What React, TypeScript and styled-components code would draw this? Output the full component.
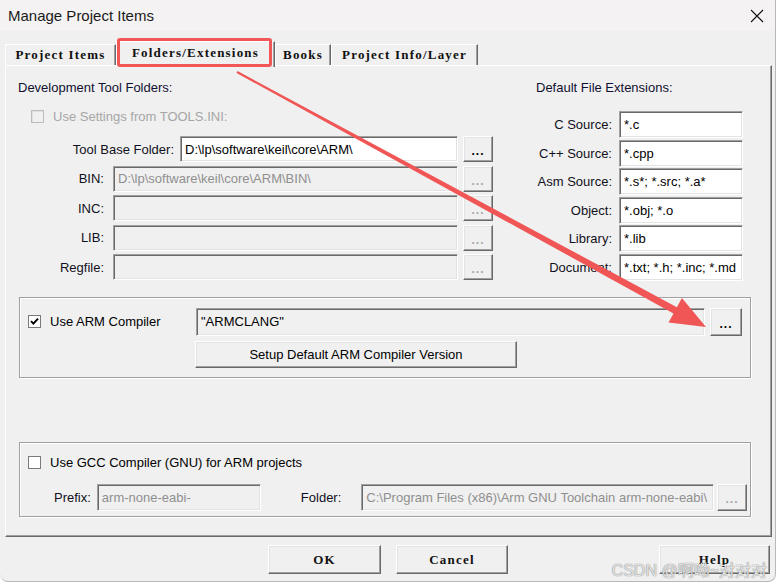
import React from 'react';
import styled, { createGlobalStyle } from 'styled-components';

const GlobalStyle = createGlobalStyle`
  html, body { margin: 0; padding: 0; background: #ffffff; }
  body {
    font-family: "Liberation Sans", Arial, sans-serif;
    font-size: 13px;
    color: #000;
  }
  * { box-sizing: border-box; }
`;

const Window = styled.div`
  position: relative;
  width: 776px;
  height: 582px;
  background: #f0f0f0;
  border-right: 1px solid #b8b8b8;
  border-bottom: 1px solid #b8b8b8;
  border-radius: 0 0 8px 8px;
  overflow: hidden;
  display: flex;
  flex-direction: column;
`;

const TitleBar = styled.div`
  height: 31px;
  flex: none;
  display: flex;
  align-items: center;
  justify-content: space-between;
  padding: 0 10px 0 8px;
  background: #f4f2f2;
  font-size: 15px;
  color: #1a1a1a;
`;

const TabStrip = styled.div`
  position: relative;
  z-index: 1;
  display: flex;
  align-items: flex-end;
  height: 24px;
  margin: 10px 0 0 5px;
  flex: none;
`;

const Tab = styled.div<{ $w: number; $active?: boolean }>`
  position: relative;
  width: ${p => p.$w}px;
  height: ${p => (p.$active ? 26 : 21)}px;
  margin-bottom: ${p => (p.$active ? -2 : 0)}px;
  padding-bottom: ${p => (p.$active ? 4 : 0)}px;
  display: flex;
  align-items: center;
  justify-content: center;
  background: #f0f0f0;
  border-top: 1px solid #ffffff;
  border-left: 1px solid #ffffff;
  border-right: 1px solid #696969;
  box-shadow: inset -1px 0 #a0a0a0;
  font-family: "Liberation Serif", "Times New Roman", serif;
  font-size: 13px;
  font-weight: bold;
  letter-spacing: 1.2px;
  color: #111;
  white-space: nowrap;
`;

const Highlight = styled.div`
  position: absolute;
  left: 0;
  right: 2px;
  top: -4px;
  height: 29px;
  border: 3px solid #f25757;
  border-radius: 3px;
  pointer-events: none;
`;

const Panel = styled.div`
  flex: none;
  height: 472px;
  margin: 0 3px 0 5px;
  padding: 14px 20px 0 12px;
  border-top: 1px solid #ffffff;
  border-left: 1px solid #ffffff;
  border-right: 1px solid #696969;
  border-bottom: 1px solid #696969;
  box-shadow: inset -1px -1px #a0a0a0;
`;

const TopSection = styled.div`
  display: flex;
  align-items: flex-start;
`;

const FolderColumn = styled.div`
  width: 475px;
  display: flex;
  flex-direction: column;
`;

const ExtColumn = styled.div`
  width: 208px;
  margin-left: 43px;
  display: flex;
  flex-direction: column;
`;

const Heading = styled.div`
  line-height: 16px;
  height: 16px;
  color: #101030;
`;

const CheckRow = styled.div<{ $indent: number; $top: number }>`
  display: flex;
  align-items: center;
  height: 14px;
  margin-top: ${p => p.$top}px;
  padding-left: ${p => p.$indent}px;
`;

const Box = styled.span<{ $disabled?: boolean }>`
  width: 13px;
  height: 13px;
  flex: none;
  display: inline-flex;
  align-items: center;
  justify-content: center;
  border: 1px solid ${p => (p.$disabled ? '#bcbcbc' : '#7a7a7a')};
  background: ${p => (p.$disabled ? '#f0f0f0' : '#ffffff')};
  box-shadow: ${p => (p.$disabled ? 'inset 1px 1px #e0e0e0' : 'none')};
`;

const CheckText = styled.span<{ $disabled?: boolean }>`
  margin-left: 9px;
  white-space: nowrap;
  color: ${p => (p.$disabled ? '#a6a6a6' : '#000')};
`;

const Rows = styled.div<{ $top: number; $gap: number }>`
  display: flex;
  flex-direction: column;
  gap: ${p => p.$gap}px;
  margin-top: ${p => p.$top}px;
`;

const Row = styled.div<{ $h: number }>`
  display: flex;
  align-items: center;
  height: ${p => p.$h}px;
`;

const Label = styled.span<{ $w: number; $gap: number }>`
  width: ${p => p.$w}px;
  flex: none;
  padding-right: ${p => p.$gap}px;
  text-align: right;
  white-space: nowrap;
  color: #101020;
`;

const Field = styled.div<{ $w?: number; $white?: boolean; $dim?: boolean }>`
  ${p => (p.$w ? `width: ${p.$w}px; flex: none;` : 'flex: 1; min-width: 0;')}
  height: 100%;
  display: flex;
  align-items: center;
  padding: 0 4px;
  overflow: hidden;
  white-space: nowrap;
  background: ${p => (p.$white ? '#ffffff' : '#f0f0f0')};
  color: ${p => (p.$dim ? '#8f8f8f' : '#000')};
  border-top: 1px solid #a0a0a0;
  border-left: 1px solid #a0a0a0;
  border-right: 1px solid #ffffff;
  border-bottom: 1px solid #ffffff;
  box-shadow: inset 1px 1px #696969, inset -1px -1px #e3e3e3;
`;

const RaisedButton = styled.div<{ $w: number; $h: number }>`
  width: ${p => p.$w}px;
  height: ${p => p.$h}px;
  flex: none;
  display: flex;
  align-items: center;
  justify-content: center;
  background: #f0f0f0;
  border-top: 1px solid #ffffff;
  border-left: 1px solid #ffffff;
  border-right: 1px solid #696969;
  border-bottom: 1px solid #696969;
  box-shadow: inset -1px -1px #a0a0a0, inset 1px 1px #e3e3e3;
  white-space: nowrap;
`;

const DotsButton = styled(RaisedButton)<{ $dim?: boolean; $gap: number }>`
  margin-left: ${p => p.$gap}px;
  padding-top: 4px;
  font-weight: bold;
  font-size: 12px;
  letter-spacing: 1px;
  color: ${p => (p.$dim ? '#a8a8a8' : '#000')};
`;

const Group = styled.fieldset<{ $top: number; $pad: string }>`
  margin: ${p => p.$top}px 0 0 1px;
  padding: ${p => p.$pad};
  min-width: 0;
  border: 1px solid #a0a0a0;
  box-shadow: inset 1px 1px #ffffff, 1px 1px #ffffff;
`;

const CompilerPick = styled.div`
  width: 168px;
  flex: none;
  display: flex;
  align-items: center;
`;

const SetupButton = styled(RaisedButton)`
  margin: 5px 0 0 167px;
`;

const GccRow = styled.div`
  display: flex;
  align-items: center;
  height: 27px;
  margin-top: 14px;
  padding-left: 26px;
`;

const InlineLabel = styled.span<{ $before: number; $after: number }>`
  margin-left: ${p => p.$before}px;
  margin-right: ${p => p.$after}px;
  white-space: nowrap;
  color: #101020;
`;

const Footer = styled.div`
  display: flex;
  align-items: flex-start;
  gap: 15px;
  margin-top: 8px;
  padding: 0 5px 0 268px;
`;

const DialogButton = styled(RaisedButton)<{ $push?: boolean }>`
  margin-left: ${p => (p.$push ? 'auto' : '0')};
  font-family: "Liberation Serif", "Times New Roman", serif;
  font-size: 13px;
  font-weight: bold;
  letter-spacing: 1.2px;
  color: #111;
`;

const Overlay = styled.svg`
  position: absolute;
  left: 0;
  top: 0;
  pointer-events: none;
`;

const Watermark = styled.div`
  position: absolute;
  right: 8px;
  bottom: 0;
  font-family: "Liberation Sans", "Noto Sans CJK SC", sans-serif;
  font-size: 16px;
  color: rgba(255, 255, 255, 0.75);
  text-shadow: 0 0 1px #8a8a8a, 0 0 1px #8a8a8a;
  pointer-events: none;
`;

const Check = () => (
  <svg width="9" height="9" viewBox="0 0 9 9">
    <path d="M1 4.2 L3.4 6.6 L8 1.6" fill="none" stroke="#000" strokeWidth="1.9" />
  </svg>
);

const CloseIcon = () => (
  <svg width="16" height="16" viewBox="0 0 16 16">
    <path d="M2 2 L14 14 M14 2 L2 14" stroke="#111" strokeWidth="1.1" />
  </svg>
);

const folders = [
  { label: 'BIN:', value: 'D:\\lp\\software\\keil\\core\\ARM\\BIN\\' },
  { label: 'INC:', value: '' },
  { label: 'LIB:', value: '' },
  { label: 'Regfile:', value: '' },
];

const extensions = [
  { label: 'C Source:', value: '*.c' },
  { label: 'C++ Source:', value: '*.cpp' },
  { label: 'Asm Source:', value: '*.s*; *.src; *.a*' },
  { label: 'Object:', value: '*.obj; *.o' },
  { label: 'Library:', value: '*.lib' },
  { label: 'Document:', value: '*.txt; *.h; *.inc; *.md' },
];

const tabs = [
  { name: 'Project Items', w: 111 },
  { name: 'Folders/Extensions', w: 159, active: true },
  { name: 'Books', w: 56 },
  { name: 'Project Info/Layer', w: 147 },
];

export default function App() {
  return (
    <>
      <GlobalStyle />
      <Window>
        <TitleBar>
          <span>Manage Project Items</span>
          <CloseIcon />
        </TitleBar>

        <TabStrip>
          {tabs.map(t => (
            <Tab key={t.name} $w={t.w} $active={t.active}>
              {t.name}
              {t.active && <Highlight />}
            </Tab>
          ))}
        </TabStrip>

        <Panel>
          <TopSection>
            <FolderColumn>
              <Heading>Development Tool Folders:</Heading>
              <CheckRow $indent={13} $top={13}>
                <Box $disabled />
                <CheckText $disabled>Use Settings from TOOLS.INI:</CheckText>
              </CheckRow>
              <Rows $top={13} $gap={3.5}>
                <Row $h={26}>
                  <Label $w={162} $gap={6}>Tool Base Folder:</Label>
                  <Field $white>D:\lp\software\keil\core\ARM\</Field>
                  <DotsButton $w={30} $h={26} $gap={5}>...</DotsButton>
                </Row>
                {folders.map(f => (
                  <Row key={f.label} $h={26}>
                    <Label $w={95} $gap={9}>{f.label}</Label>
                    <Field $dim>{f.value}</Field>
                    <DotsButton $w={30} $h={26} $gap={5} $dim>...</DotsButton>
                  </Row>
                ))}
              </Rows>
            </FolderColumn>

            <ExtColumn>
              <Heading>Default File Extensions:</Heading>
              <Rows $top={15} $gap={1.6}>
                {extensions.map(e => (
                  <Row key={e.label} $h={27}>
                    <Label $w={83} $gap={7}>{e.label}</Label>
                    <Field $white $w={124}>{e.value}</Field>
                  </Row>
                ))}
              </Rows>
            </ExtColumn>
          </TopSection>

          <Group $top={16} $pad="10px 8px 9px 8px">
            <Row $h={28}>
              <CompilerPick>
                <Box>
                  <Check />
                </Box>
                <CheckText>Use ARM Compiler</CheckText>
              </CompilerPick>
              <Field>"ARMCLANG"</Field>
              <DotsButton $w={32} $h={28} $gap={5}>...</DotsButton>
            </Row>
            <SetupButton $w={322} $h={27}>Setup Default ARM Compiler Version</SetupButton>
          </Group>

          <Group $top={64} $pad="13px 3px 5px 8px">
            <CheckRow $indent={0} $top={0}>
              <Box />
              <CheckText>Use GCC Compiler (GNU) for ARM projects</CheckText>
            </CheckRow>
            <GccRow>
              <InlineLabel $before={0} $after={6}>Prefix:</InlineLabel>
              <Field $w={164} $dim>arm-none-eabi-</Field>
              <InlineLabel $before={40} $after={20}>Folder:</InlineLabel>
              <Field $dim>C:\Program Files (x86)\Arm GNU Toolchain arm-none-eabi\</Field>
              <DotsButton $w={30} $h={27} $gap={3} $dim>...</DotsButton>
            </GccRow>
          </Group>
        </Panel>

        <Footer>
          <DialogButton $w={113} $h={29}>OK</DialogButton>
          <DialogButton $w={112} $h={29}>Cancel</DialogButton>
          <DialogButton $w={111} $h={29} $push>Help</DialogButton>
        </Footer>

        <Overlay width="780" height="585" viewBox="0 0 780 585">
          <polygon
            points="237.5,71.1 676.9,307.2 681.9,298 706,327 668.5,322.6 673.5,313.4 236.5,72.9"
            fill="#f05656"
          />
        </Overlay>
        <Watermark>CSDN @啊呦~对对对</Watermark>
      </Window>
    </>
  );
}
